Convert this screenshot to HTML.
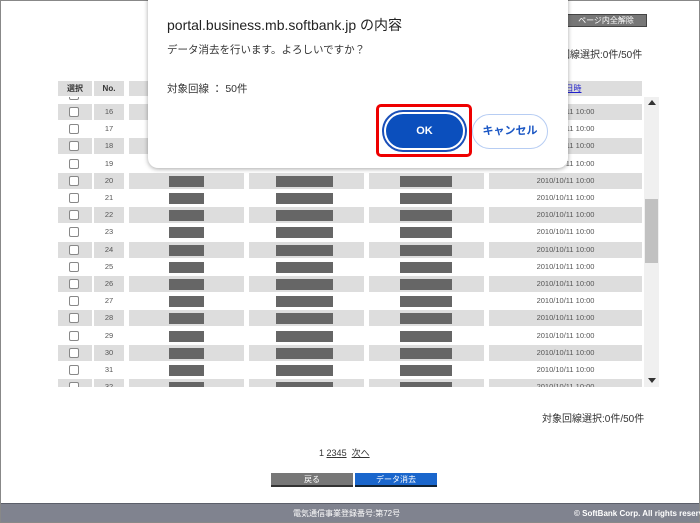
<!DOCTYPE html>
<html><head><meta charset="utf-8"><style>
*{margin:0;padding:0;box-sizing:border-box}
body{width:700px;height:523px;position:relative;overflow:hidden;background:#fff;font-family:"Liberation Sans","Noto Sans CJK JP",sans-serif}
.frame{position:absolute;left:0;top:0;width:700px;height:523px;border:1px solid #888}
.a{position:absolute}
.hd{position:absolute;top:81px;height:15px;background:#ddd;font-size:8px;font-weight:bold;color:#333;text-align:center;line-height:15px}
.body{position:absolute;left:58px;top:97px;width:600px;height:290px;overflow:hidden}
.row{position:absolute;left:0;width:584px;height:17.2px;font-size:7.5px;color:#555}
.row div{position:absolute;top:0;height:16px;text-align:center;line-height:16px}
.g div.c{background:#ddd}
.cb{position:absolute;left:11px;top:3px;width:10px;height:10px;border:1px solid #888;border-radius:2px;background:#fff}
.bar{position:absolute;top:3px;height:11px;background:#666}
</style></head><body>
<div class="frame"></div>
<div class="a" style="left:565px;top:14px;width:82px;height:13px;background:#777;border:1px solid #444;color:#fff;font-size:8px;text-align:center;line-height:11px">ページ内全解除</div>
<div class="a" style="left:560px;top:46px;font-size:10px;color:#333">回線選択:0件/50件</div>
<div class="hd" style="left:58px;width:34px">選択</div>
<div class="hd" style="left:94px;width:30px">No.</div>
<div class="hd" style="left:129px;width:115px"></div>
<div class="hd" style="left:249px;width:115px"></div>
<div class="hd" style="left:369px;width:115px"></div>
<div class="hd" style="left:489px;width:153px;color:#22c;text-decoration:underline;font-weight:normal">消去日時</div>
<div class="body">
<div class="row" style="top:-10px"><div class="c" style="left:0;width:34px"><span class="cb"></span></div></div>
<div class="row g" style="top:7px"><div class="c" style="left:0;width:34px"><span class="cb"></span></div><div class="c" style="left:36px;width:30px">16</div><div class="c" style="left:71px;width:115px"></div><div class="c" style="left:191px;width:115px"></div><div class="c" style="left:311px;width:115px"></div><div class="c" style="left:431px;width:153px">2010/10/11 10:00</div></div>
<div class="row" style="top:24.2px"><div style="left:0;width:34px"><span class="cb"></span></div><div style="left:36px;width:30px">17</div><div style="left:431px;width:153px">2010/10/11 10:00</div></div>
<div class="row g" style="top:41.4px"><div class="c" style="left:0;width:34px"><span class="cb"></span></div><div class="c" style="left:36px;width:30px">18</div><div class="c" style="left:71px;width:115px"></div><div class="c" style="left:191px;width:115px"></div><div class="c" style="left:311px;width:115px"></div><div class="c" style="left:431px;width:153px">2010/10/11 10:00</div></div>
<div class="row" style="top:58.6px"><div style="left:0;width:34px"><span class="cb"></span></div><div style="left:36px;width:30px">19</div><div style="left:431px;width:153px">2010/10/11 10:00</div></div>
</div>
<div class="body" id="b2"></div>
<div class="a" style="left:644px;top:97px;width:15px;height:290px;background:#f0f0f0"></div>
<div class="a" style="left:645px;top:199px;width:13px;height:64px;background:#c1c1c1"></div>
<div class="a" style="left:648px;top:100px;width:0;height:0;border-left:4px solid transparent;border-right:4px solid transparent;border-bottom:5px solid #333"></div>
<div class="a" style="left:648px;top:378px;width:0;height:0;border-left:4px solid transparent;border-right:4px solid transparent;border-top:5px solid #333"></div>
<script>
var b=document.getElementById('b2'),h='';
for(var n=20;n<=32;n++){var t=7+(n-16)*17.2,g=n%2==0,c=g?'c':'';
h+='<div class="row'+(g?' g':'')+'" style="top:'+t+'px"><div class="'+c+'" style="left:0;width:34px"><span class="cb"></span></div><div class="'+c+'" style="left:36px;width:30px">'+n+'</div><div class="'+c+'" style="left:71px;width:115px"><span class="bar" style="left:40px;width:35px"></span></div><div class="'+c+'" style="left:191px;width:115px"><span class="bar" style="left:27px;width:57px"></span></div><div class="'+c+'" style="left:311px;width:115px"><span class="bar" style="left:31px;width:52px"></span></div><div class="'+c+'" style="left:431px;width:153px">2010/10/11 10:00</div></div>';}
b.innerHTML=h;
</script>
<div class="a" style="left:542px;top:410px;font-size:10px;color:#333">対象回線選択:0件/50件</div>
<div class="a" style="left:319px;top:446px;font-size:9px;color:#333">1 <u>2</u><u>3</u><u>4</u><u>5</u> &nbsp;<u>次へ</u></div>
<div class="a" style="left:271px;top:473px;width:82px;height:14px;background:#777;border-bottom:2px solid #333;color:#fff;font-size:8px;text-align:center;line-height:13px">戻る</div>
<div class="a" style="left:355px;top:473px;width:82px;height:14px;background:#1a66cc;border-bottom:2px solid #123;color:#fff;font-size:8px;text-align:center;line-height:13px">データ消去</div>
<div class="a" style="left:1px;top:503px;width:698px;height:19px;background:#80838f;border-top:1px solid #5c5f6a;color:#fff;font-size:8px;line-height:19px"><span class="a" style="left:292px">電気通信事業登録番号:第72号</span><span class="a" style="left:573px;font-weight:bold;white-space:nowrap">© SoftBank Corp. All rights reserved</span></div>
<div class="a" style="left:148px;top:-10px;width:420px;height:178px;background:#fff;border-radius:10px;box-shadow:0 1px 5px rgba(0,0,0,.35)"></div>
<div class="a" style="left:167px;top:15px;font-size:14px;color:#222">portal.business.mb.softbank.jp の内容</div>
<div class="a" style="left:167px;top:42px;font-size:10.5px;color:#333">データ消去を行います。よろしいですか？</div>
<div class="a" style="left:167px;top:81px;font-size:10.5px;color:#333">対象回線 ： 50件</div>
<div class="a" style="left:376px;top:104px;width:96px;height:53px;border:3px solid #e00;border-radius:5px"></div>
<div class="a" style="left:382px;top:110px;width:85px;height:42px;border:2px solid #1a4fb8;border-radius:21px;padding:2px"><div style="width:100%;height:100%;background:#0b4fbd;border-radius:17px;color:#fff;font-size:11px;font-weight:bold;text-align:center;line-height:34px">OK</div></div>
<div class="a" style="left:472px;top:114px;width:76px;height:35px;border:1px solid #b7cdf3;border-radius:18px;color:#1a56c4;font-size:11px;font-weight:bold;text-align:center;line-height:33px">キャンセル</div>
</body></html>
